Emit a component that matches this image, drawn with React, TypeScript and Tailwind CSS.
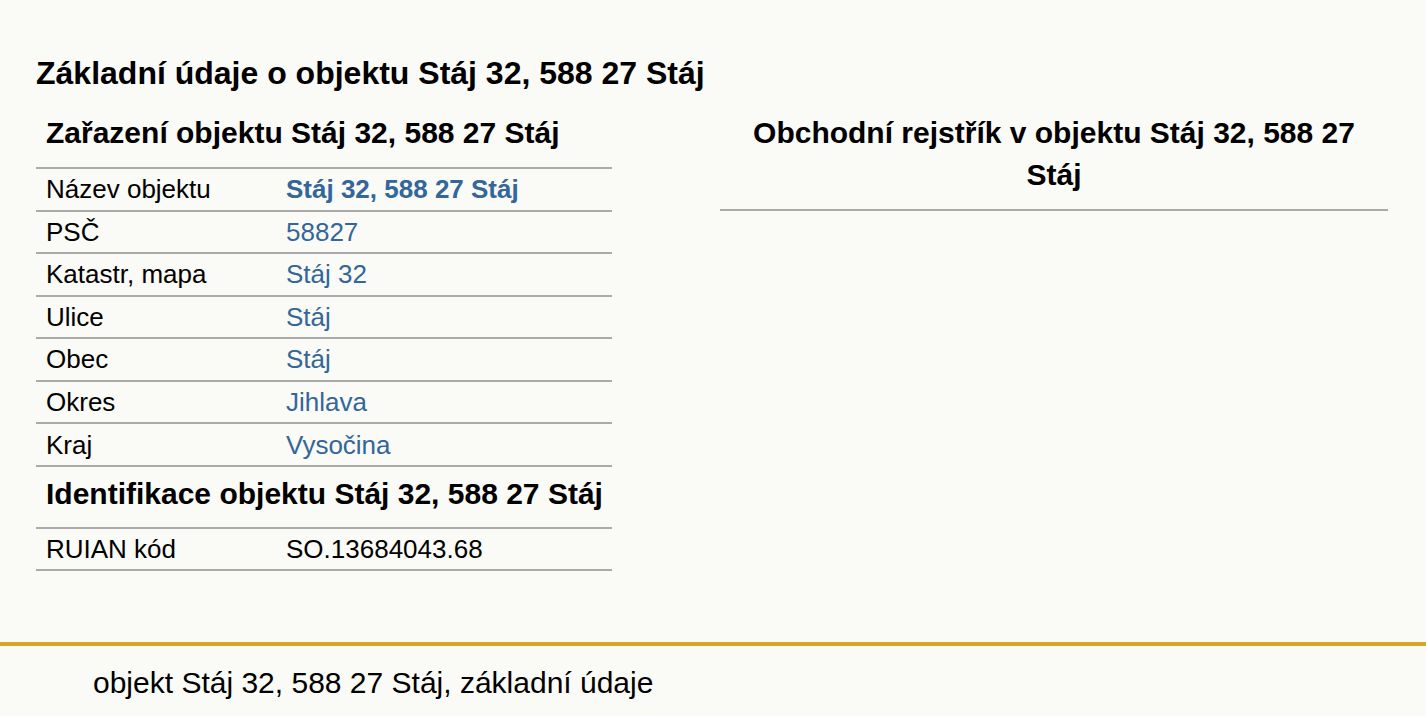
import React from "react";

const rows: { label: string; value: string; bold?: boolean }[] = [
  { label: "Název objektu", value: "Stáj 32, 588 27 Stáj", bold: true },
  { label: "PSČ", value: "58827" },
  { label: "Katastr, mapa", value: "Stáj 32" },
  { label: "Ulice", value: "Stáj" },
  { label: "Obec", value: "Stáj" },
  { label: "Okres", value: "Jihlava" },
  { label: "Kraj", value: "Vysočina" },
];

export default function App() {
  return (
    <div
      className="min-h-[716px] bg-[#fafaf6] text-black"
      style={{ fontFamily: '"Liberation Sans", Arial, sans-serif' }}
    >
      <main className="h-[642px] pl-[36px] pr-[38px] pt-[54px]">
        <h1 className="text-[32px] font-bold leading-[38px]">
          Základní údaje o objektu Stáj 32, 588 27 Stáj
        </h1>
        <div className="grid grid-cols-[668px_668px] gap-x-[16px]">
          <section className="pt-[23px]">
            <div className="w-[576px]">
              <h2 className="border-b-2 border-[#aaaaaa] pb-[16px] pl-[10px] text-[30px] font-bold leading-[36px]">
                Zařazení objektu Stáj 32, 588 27 Stáj
              </h2>
              {rows.map((r) => (
                <div
                  key={r.label}
                  className="flex h-[42.55px] items-center border-b-2 border-[#aaaaaa] text-[26px] leading-[30px]"
                >
                  <div className="w-[240px] pl-[10px]">{r.label}</div>
                  <a
                    href="#"
                    className={
                      "pl-[10px] text-[#336699] " + (r.bold ? "font-bold" : "")
                    }
                  >
                    {r.value}
                  </a>
                </div>
              ))}
              <h2 className="border-b-2 border-[#aaaaaa] pb-[18px] pl-[10px] pt-[12px] text-[30px] font-bold leading-[30px]">
                Identifikace objektu Stáj 32, 588 27 Stáj
              </h2>
              <div className="flex h-[42.6px] items-center border-b-2 border-[#aaaaaa] text-[26px] leading-[30px]">
                <div className="w-[240px] pl-[10px]">RUIAN kód</div>
                <div className="pl-[10px]">SO.13684043.68</div>
              </div>
            </div>
          </section>
          <section className="pt-[20px]">
            <h2 className="border-b-2 border-[#aaaaaa] px-[30px] pb-[13px] text-center text-[30px] font-bold leading-[42px]">
              Obchodní rejstřík v objektu Stáj 32, 588 27 Stáj
            </h2>
          </section>
        </div>
      </main>
      <footer className="h-[74px] border-t-4 border-[#daa520] pl-[93px] pt-[19px]">
        <p className="text-[30px] leading-[36px]">
          objekt Stáj 32, 588 27 Stáj, základní údaje
        </p>
      </footer>
    </div>
  );
}
